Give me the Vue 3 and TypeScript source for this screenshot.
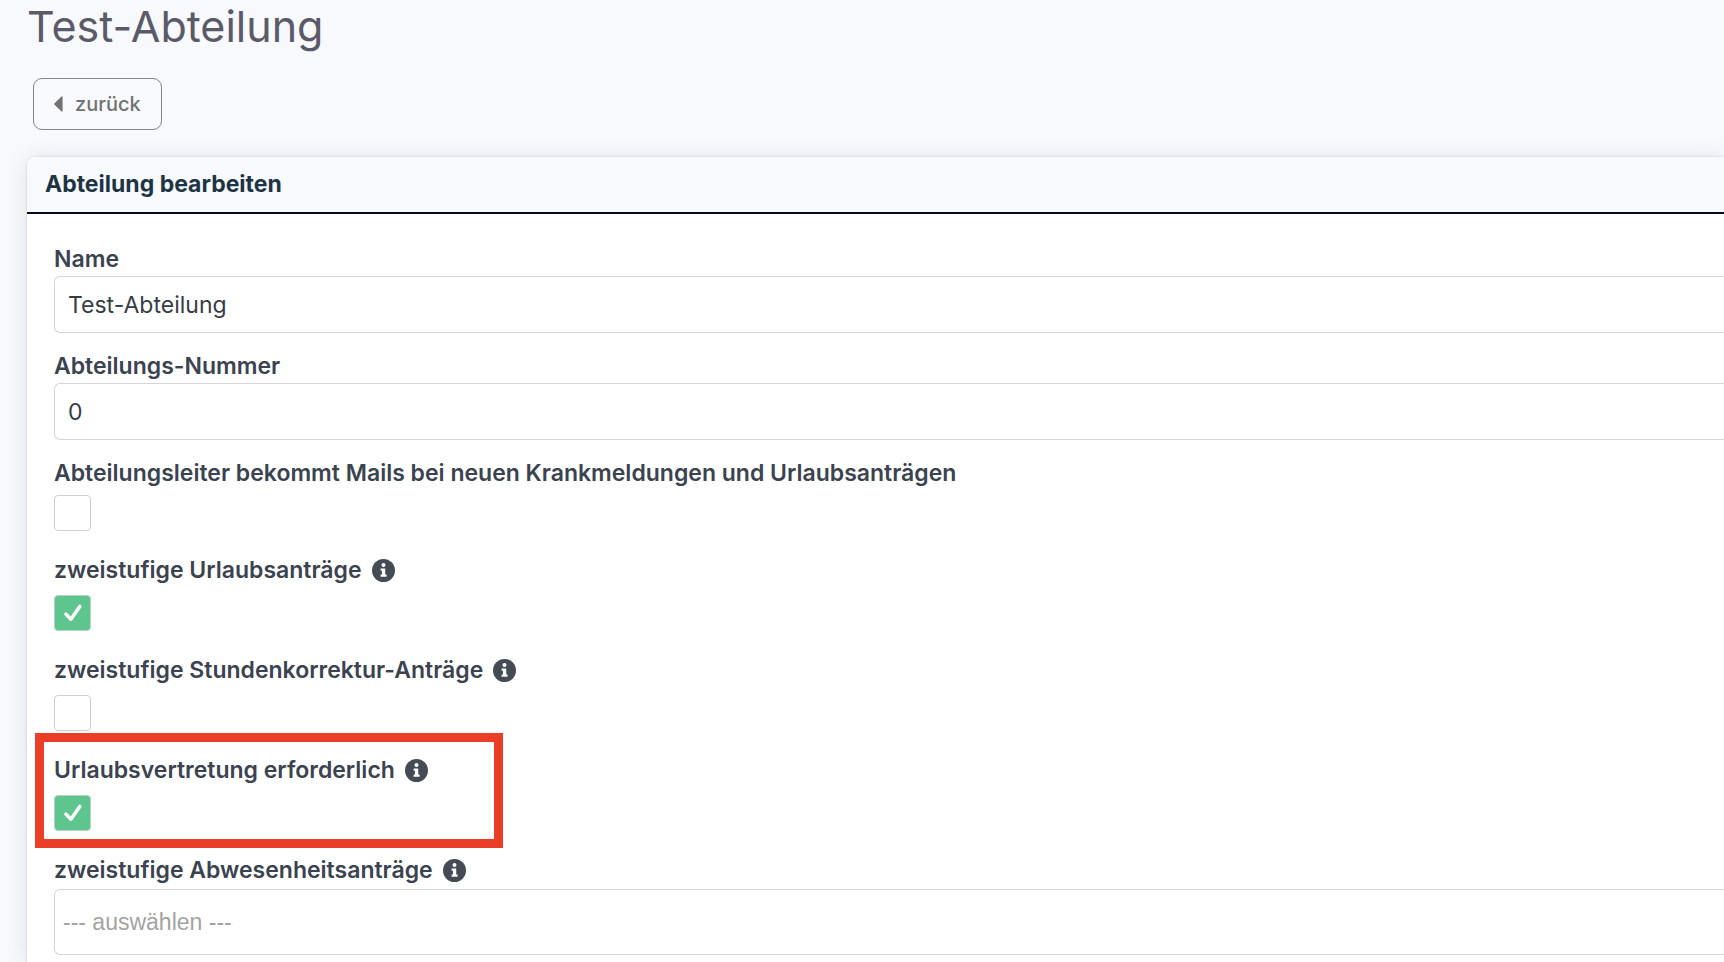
<script setup lang="ts">
import { reactive } from 'vue'

interface Field {
  id: string
  label: string
  kind: 'text' | 'check' | 'select'
  info?: boolean
  marked?: boolean
  tight?: boolean
}

const fields: Field[] = [
  { id: 'name', label: 'Name', kind: 'text' },
  { id: 'nummer', label: 'Abteilungs-Nummer', kind: 'text' },
  { id: 'mails', label: 'Abteilungsleiter bekommt Mails bei neuen Krankmeldungen und Urlaubsanträgen', kind: 'check', tight: true },
  { id: 'urlaub', label: 'zweistufige Urlaubsanträge', kind: 'check', info: true },
  { id: 'stunden', label: 'zweistufige Stundenkorrektur-Anträge', kind: 'check', info: true },
  { id: 'vertretung', label: 'Urlaubsvertretung erforderlich', kind: 'check', info: true, marked: true },
  { id: 'abwesenheit', label: 'zweistufige Abwesenheitsanträge', kind: 'select', info: true },
]

const texts = reactive<Record<string, string>>({ name: 'Test-Abteilung', nummer: '0', abwesenheit: '' })
const checks = reactive<Record<string, boolean>>({ mails: false, urlaub: true, stunden: false, vertretung: true })
</script>

<template>
  <main class="page">
    <h1 class="title">Test-Abteilung</h1>
    <button type="button" class="back">
      <svg class="caret" viewBox="0 0 9 16" aria-hidden="true">
        <path d="M8.6 1.2v13.6c0 .9-.8 1.1-1.3.5L.5 8.8c-.5-.5-.5-1.1 0-1.6L7.3.7C7.8.1 8.6.3 8.6 1.2z" />
      </svg>
      zurück
    </button>

    <section class="card">
      <h2 class="card-head">Abteilung bearbeiten</h2>
      <form class="card-body" @submit.prevent>
        <div v-for="f in fields" :key="f.id" class="field" :class="[f.kind, { tight: f.tight }]">
          <div class="label-row">
            <label :for="f.id">{{ f.label }}</label>
            <svg v-if="f.info" class="info" viewBox="0 0 24 24" aria-hidden="true">
              <circle cx="12" cy="12" r="12" fill="#454b54" />
              <path d="M12 4.2a2.1 2.1 0 1 1 0 4.2a2.1 2.1 0 0 1 0-4.2zM9 9.800h4.800v6.400h1.400v2.400H9v-2.400h1.400v-4H9z" fill="#fff" />
            </svg>
          </div>
          <input v-if="f.kind === 'text'" :id="f.id" v-model="texts[f.id]" type="text" class="control" />
          <span v-else-if="f.kind === 'check'" class="check-box">
            <input :id="f.id" v-model="checks[f.id]" type="checkbox" />
            <svg v-if="checks[f.id]" class="tick" viewBox="0 0 18 18" aria-hidden="true">
              <path d="M2 10.2L6.9 15.2L15.8 2.4" fill="none" stroke="#fff" stroke-width="3.5" stroke-linecap="round" stroke-linejoin="round" />
            </svg>
          </span>
          <select v-else :id="f.id" v-model="texts[f.id]" class="control choice">
            <option value="">--- auswählen ---</option>
          </select>
          <span v-if="f.marked" class="marker" aria-hidden="true"></span>
        </div>
      </form>
    </section>
  </main>
</template>

<style>
body {
  margin: 0;
  background: #f8f9fd;
}
</style>

<style scoped>
.page {
  box-sizing: border-box;
  min-height: 100vh;
  display: flex;
  flex-direction: column;
  align-items: flex-start;
  overflow: hidden;
  padding-left: 27px;
  background: #f8f9fd;
  font-family: Inter, "Liberation Sans", sans-serif;
}

.title {
  margin: 0;
  font-size: 43px;
  font-weight: 400;
  line-height: 52px;
  color: #5b5a68;
}

.back {
  box-sizing: border-box;
  display: flex;
  align-items: center;
  gap: 12px;
  height: 52px;
  margin: 26px 0 27px 6px;
  padding: 0 20px;
  border: 1px solid #858585;
  border-radius: 9px;
  background: transparent;
  color: #727272;
  font-family: inherit;
  font-size: 20px;
  font-weight: 500;
}

.caret {
  width: 9px;
  height: 16px;
  fill: #727272;
}

.card {
  flex: 1;
  align-self: stretch;
  border-top-left-radius: 8px;
  background: #fff;
  box-shadow: 0 0 1px 1px rgba(60, 60, 110, 0.08), 0 2px 22px rgba(0, 0, 0, 0.1);
}

.card-head {
  margin: 0;
  padding: 0 18px;
  border-bottom: 2px solid #04092c;
  border-top-left-radius: 8px;
  background: #f8f9fd;
  color: #1d3444;
  font-size: 23px;
  font-weight: 700;
  line-height: 55px;
}

.card-body {
  display: flex;
  flex-direction: column;
  padding: 28px 0 6px 27px;
}

.field {
  position: relative;
}

.field.text {
  margin-bottom: 16px;
}

.field.check {
  margin-bottom: 22px;
}

.label-row {
  display: flex;
  align-items: center;
  gap: 10px;
  height: 34px;
  color: #3b4350;
  font-size: 23px;
  font-weight: 600;
  line-height: 34px;
}

.info {
  width: 23px;
  height: 23px;
}

.control {
  box-sizing: border-box;
  display: block;
  width: 100%;
  height: 57px;
  margin: 0;
  padding: 0 13px;
  border: 1px solid #d3d7dc;
  border-right: 0;
  border-radius: 6px 0 0 6px;
  outline: 0;
  background: #fff;
  color: #373d47;
  font-family: inherit;
  font-size: 23px;
}

.choice {
  appearance: none;
  height: 66px;
  margin-top: 2px;
  padding: 0 8px;
  color: #a3a3a3;
  font-family: "Liberation Sans", Arial, sans-serif;
}

.check-box {
  display: grid;
  place-items: center;
  width: 37px;
  height: 36px;
  margin-top: 8px;
}

.tight .check-box {
  margin-top: 5px;
}

.check-box > * {
  grid-area: 1 / 1;
}

.check-box input {
  appearance: none;
  box-sizing: border-box;
  width: 100%;
  height: 100%;
  margin: 0;
  border: 1px solid #ced0d2;
  border-radius: 4px;
  background: #fff;
}

.check-box input:checked {
  border-color: #b5d2c3;
  background: #5fc58f;
}

.tick {
  width: 18px;
  height: 18px;
  pointer-events: none;
}

.marker {
  position: absolute;
  box-sizing: border-box;
  top: -20px;
  bottom: -17px;
  left: -19px;
  width: 468px;
  border: 9px solid #ea3f26;
  pointer-events: none;
}
</style>
